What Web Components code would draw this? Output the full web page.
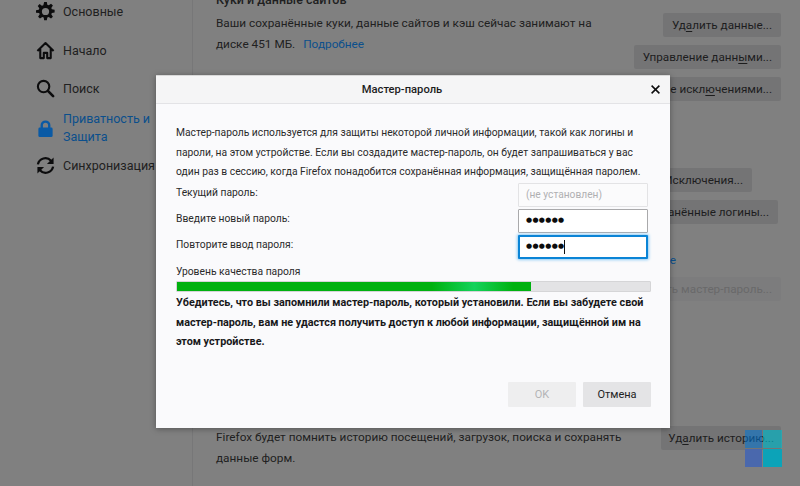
<!DOCTYPE html>
<html lang="ru">
<head>
<meta charset="utf-8">
<title>Мастер-пароль</title>
<style>
  html, body { margin: 0; height: 100%; }
  body { width: 800px; height: 486px; overflow: hidden; position: relative; font-family: Roboto, "Noto Sans", sans-serif; }
</style>
</head>
<body>
<prefs-page>
  <prefs-sidebar slot="sidebar">
    <nav-item icon="gear">Основные</nav-item>
    <nav-item icon="home" style="--top:20px">Начало</nav-item>
    <nav-item icon="search" style="--top:19px">Поиск</nav-item>
    <nav-item icon="lock" active style="--top:12px">Приватность и<br>Защита</nav-item>
    <nav-item icon="sync" style="--top:10px">Синхронизация</nav-item>
  </prefs-sidebar>
  <prefs-content slot="content"></prefs-content>
</prefs-page>
<modal-layer>
  <password-dialog></password-dialog>
</modal-layer>
<corner-logo></corner-logo>

<script>
const icons = {
  gear: `<path fill="#0c0c0d" fill-rule="evenodd" d="M8.600 0h2.800l.5 2.900 1.500.6L15.800 1.800l2 2-1.700 2.400.6 1.500 2.900.5v2.800l-2.900.5-.6 1.500 1.700 2.400-2 2-2.400-1.700-1.500.6-.5 2.900H8.600l-.5-2.900-1.500-.6-2.400 1.700-2-2 1.700-2.400-.6-1.500L0 11.400V8.600l2.900-.5.6-1.500-1.700-2.400 2-2 2.400 1.700 1.500-.6zM10 6.200a3.800 3.800 0 1 0 0 7.600 3.800 3.800 0 0 0 0-7.600z"/>`,
  home: `<path fill="none" stroke="#0c0c0d" stroke-width="2.200" stroke-linejoin="round" d="M1.500 10.500 10 2.200l8.500 8.300M4.500 8.500V18h3.700v-5.500h3.600V18h3.700V8.500"/>`,
  search: `<circle cx="8" cy="8" r="6" fill="none" stroke="#0c0c0d" stroke-width="2.200"/><path stroke="#0c0c0d" stroke-width="2.800" stroke-linecap="round" d="m12.800 12.800 5.200 5.200"/>`,
  lock: `<path fill="#0a5aa5" fill-rule="evenodd" d="M10 1.500a5.200 5.200 0 0 0-5.200 5.200V9H4a1.500 1.500 0 0 0-1.500 1.500v7A1.500 1.500 0 0 0 4 19h12a1.500 1.500 0 0 0 1.500-1.500v-7A1.500 1.500 0 0 0 16 9h-.8V6.700A5.200 5.200 0 0 0 10 1.500zM7.300 9V6.700a2.700 2.700 0 0 1 5.400 0V9z"/>`,
  sync: `<g fill="none" stroke="#0c0c0d" stroke-width="2.400"><path d="M2 8.800A8 8 0 0 1 15.800 5"/><path d="M18 11.200A8 8 0 0 1 4.200 15"/></g><path fill="#0c0c0d" d="M18.500 1.500v7h-7zM1.500 18.500v-7h7z"/>`
};

class PrefsPage extends HTMLElement {
  constructor() {
    super();
    this.attachShadow({mode: 'open'});
    this.shadowRoot.innerHTML = `
      <style>
        :host { display: flex; width: 800px; height: 486px; background: #808080; color: #1f1f20; overflow: hidden; }
      </style>
      <slot name="sidebar"></slot>
      <slot name="content"></slot>`;
  }
}

class PrefsSidebar extends HTMLElement {
  constructor() {
    super();
    this.attachShadow({mode: 'open'});
    this.shadowRoot.innerHTML = `
      <style>
        :host {
          display: flex; flex-direction: column; box-sizing: border-box; flex: none;
          width: 193px; height: 486px; padding: 2px 0 0 36px;
          border-right: 1px solid #777778;
        }
      </style>
      <slot></slot>`;
  }
}

class NavItem extends HTMLElement {
  constructor() {
    super();
    this.attachShadow({mode: 'open'});
    const active = this.hasAttribute('active');
    this.shadowRoot.innerHTML = `
      <style>
        :host {
          display: flex; align-items: center; gap: 8px;
          margin-top: var(--top, 0);
          font-size: 12.500px; line-height: 18px; white-space: nowrap;
          color: ${active ? '#0b4f8c' : '#202021'};
        }
        svg { width: 19px; height: 19px; flex: none; }
      </style>
      <svg viewBox="0 0 20 20">${icons[this.getAttribute('icon')]}</svg>
      <span><slot></slot></span>`;
  }
}

class PrefButton extends HTMLElement {
  constructor() {
    super();
    this.attachShadow({mode: 'open'});
    this.shadowRoot.innerHTML = `
      <style>
        :host {
          display: flex; align-items: center; justify-content: center; box-sizing: border-box;
          height: 24px; padding: 0 var(--pad, 9px); border-radius: 2px; white-space: nowrap;
          background: #747475; color: #1d1d1e; font-size: 11.700px;
          margin-left: auto;
        }
        :host([disabled]) { background: #7c7c7d; color: #69696a; }
      </style>
      <slot></slot>`;
  }
}

class PrefsContent extends HTMLElement {
  constructor() {
    super();
    this.attachShadow({mode: 'open'});
    this.shadowRoot.innerHTML = `
      <style>
        :host {
          display: grid; grid-template-columns: 365px 200px;
          box-sizing: border-box; flex: none; width: 607px; height: 486px; padding: 0 19px 0 23px;
          font-size: 11.800px; line-height: 21px; color: #202021; align-content: start;
        }
        .left { height: 426px; white-space: nowrap; }
        h2 { font-size: 12.500px; font-weight: 500; margin: -11px 0 0; line-height: 21px; height: 24px; }
        p { margin: 0; }
        a { color: #0b4f8c; text-decoration: none; margin-left: 5px; }
        .more { margin: 195px 0 0 394px; height: 21px; }
        .right { display: flex; flex-direction: column; height: 426px; }
        u { text-underline-offset: 2px; }
        .tail { grid-column: 1 / 3; display: flex; justify-content: space-between; }
        .tail p { margin-top: 1px; white-space: nowrap; }
      </style>
      <div class="left">
        <h2>Куки и данные сайтов</h2>
        <p>Ваши сохранённые куки, данные сайтов и кэш сейчас занимают на<br>диске 451 МБ. <a>Подробнее</a></p>
        <p class="more"><a>Подробнее</a></p>
      </div>
      <div class="right">
        <pref-button style="margin-top:13px">Уд<u>а</u>лить данные...</pref-button>
        <pref-button style="margin-top:8px">Управление данн<u>ы</u>ми...</pref-button>
        <pref-button style="margin-top:8px">Управление искл<u>ю</u>чениями...</pref-button>
        <pref-button style="margin-top:67px;margin-right:29px">Исключения...</pref-button>
        <pref-button style="margin-top:8px;margin-right:3px">Сохранённые логины...</pref-button>
        <pref-button disabled style="margin-top:53px">Сменить мастер-пароль...</pref-button>
      </div>
      <div class="tail">
        <p>Firefox будет помнить историю посещений, загрузок, поиска и сохранять<br>данные форм.</p>
        <pref-button style="--pad:7px">Уд<u>а</u>лить историю...</pref-button>
      </div>`;
  }
}

class ModalLayer extends HTMLElement {
  constructor() {
    super();
    this.attachShadow({mode: 'open'});
    this.shadowRoot.innerHTML = `
      <style>
        :host { display: block; position: absolute; left: 156px; top: 75px; }
      </style>
      <slot></slot>`;
  }
}

class DialogButton extends HTMLElement {
  constructor() {
    super();
    this.attachShadow({mode: 'open'});
    this.shadowRoot.innerHTML = `
      <style>
        :host {
          display: flex; align-items: center; justify-content: center;
          box-sizing: border-box; padding-top: 1px;
          width: 68px; height: 25px; border-radius: 1px;
          background: #e4e4e6; color: #222223; font-size: 11px;
        }
        :host([disabled]) { background: #eeeeef; color: #b4b4b6; }
      </style>
      <slot></slot>`;
  }
}

class PasswordField extends HTMLElement {
  constructor() {
    super();
    this.attachShadow({mode: 'open'});
    const state = this.getAttribute('state') || '';
    this.shadowRoot.innerHTML = `
      <style>
        :host { display: flex; align-items: center; justify-content: space-between; height: 24px; color: #2a2a2b; }
        .label { padding-bottom: 5px; line-height: 17px; }
        .box {
          box-sizing: border-box; width: 130px; height: 24px; padding: 0 6px 0 7px;
          display: flex; align-items: center; background: #fff; border: 1px solid #a9a9ab;
          font-size: 10.200px; color: #0c0c0d; border-radius: 1px;
        }
        .box.off { background: #fbfbfc; border-color: #e3e3e5; color: #b0b0b2; }
        .box.focus { border: 2px solid #0a84d6; box-shadow: 0 0 3px 1px #8fcdf5; padding-left: 6px; }
        .dots { letter-spacing: .3px; font-family: "DejaVu Sans", sans-serif; font-size: 7px; }
        .caret { width: 1px; height: 14px; background: #111; }
      </style>
      <span class="label"><slot></slot></span>
      <div class="box ${state}">
        ${this.hasAttribute('placeholder') ? `<span>${this.getAttribute('placeholder')}</span>` : `<span class="dots">●●●●●●</span>`}
        ${state === 'focus' ? '<span class="caret"></span>' : ''}
      </div>`;
  }
}

class QualityMeter extends HTMLElement {
  constructor() {
    super();
    this.attachShadow({mode: 'open'});
    this.shadowRoot.innerHTML = `
      <style>
        :host { display: block; height: 11px; box-sizing: border-box; background: #e3e3e5; border: 1px solid #d5d5d7; border-radius: 1px; }
        .fill {
          width: 354px; height: 100%;
          background: linear-gradient(90deg, #00b10f 0, #00b10f 72%, #14d25c 84%, #00b10f 95%);
        }
      </style>
      <div class="fill"></div>`;
  }
}

class PasswordDialog extends HTMLElement {
  constructor() {
    super();
    this.attachShadow({mode: 'open'});
    this.shadowRoot.innerHTML = `
      <style>
        :host {
          display: flex; flex-direction: column; box-sizing: border-box;
          width: 514px; height: 353px; background: #fafafc; color: #2a2a2b;
          box-shadow: 0 1px 6px rgba(0,0,0,.35); border-top: 1px solid #d8d8d8;
          font-size: 10.300px; line-height: 19.500px;
        }
        header {
          display: flex; align-items: center; justify-content: center; position: relative;
          box-sizing: border-box; padding-right: 22px;
          height: 28px; flex: none; background: #f5f5f6; border-bottom: 1px solid #e3e3e6;
          font-size: 11.200px; font-weight: 500; color: #1c1c1d;
        }
        header svg { position: absolute; right: 10px; top: 9px; width: 9px; height: 9px; }
        main { flex: 1; display: flex; flex-direction: column; padding: 19px 22px 0 20px; }
        p { margin: 0; }
        .fields { display: flex; flex-direction: column; gap: 2px; margin-top: 1px; }
        .meter-label { margin-top: 3px; }
        quality-meter { margin: 0 -3px 0 0; }
        .warn { font-size: 10.800px; font-weight: 700; margin-top: 1px; color: #18181a; white-space: nowrap; }
        footer { display: flex; justify-content: flex-end; gap: 7px; padding: 0 19px 21px; }
      </style>
      <header>Мастер-пароль
        <svg viewBox="0 0 9 9"><path stroke="#0c0c0d" stroke-width="1.500" d="m.6.6 7.800 7.800M8.400.6.600 8.400"/></svg>
      </header>
      <main>
        <p style="white-space:nowrap">Мастер-пароль используется для защиты некоторой личной информации, такой как логины и<br>пароли, на этом устройстве. Если вы создадите мастер-пароль, он будет запрашиваться у вас<br>один раз в сессию, когда Firefox понадобится сохранённая информация, защищённая паролем.</p>
        <div class="fields">
          <password-field state="off" placeholder="(не установлен)">Текущий пароль:</password-field>
          <password-field>Введите новый пароль:</password-field>
          <password-field state="focus">Повторите ввод пароля:</password-field>
        </div>
        <div class="meter-label">Уровень качества пароля</div>
        <quality-meter></quality-meter>
        <p class="warn">Убедитесь, что вы запомнили мастер-пароль, который установили. Если вы забудете свой<br>мастер-пароль, вам не удастся получить доступ к любой информации, защищённой им на<br>этом устройстве.</p>
      </main>
      <footer>
        <dialog-button disabled>OK</dialog-button>
        <dialog-button>Отмена</dialog-button>
      </footer>`;
  }
}

class CornerLogo extends HTMLElement {
  constructor() {
    super();
    this.attachShadow({mode: 'open'});
    this.shadowRoot.innerHTML = `
      <style>
        :host {
          position: absolute; left: 745px; top: 430px;
          display: grid; grid-template-columns: 17px 19px; grid-template-rows: 18px 18px; gap: 1px;
        }
        i { display: block; }
      </style>
      <i style="background:rgba(0,118,215,.55)"></i>
      <i style="background:rgba(0,185,200,.65)"></i>
      <i style="background:#4a68ad"></i>
      <i style="background:#0ca3b8"></i>`;
  }
}

customElements.define('prefs-page', PrefsPage);
customElements.define('prefs-sidebar', PrefsSidebar);
customElements.define('nav-item', NavItem);
customElements.define('pref-button', PrefButton);
customElements.define('prefs-content', PrefsContent);
customElements.define('modal-layer', ModalLayer);
customElements.define('dialog-button', DialogButton);
customElements.define('password-field', PasswordField);
customElements.define('quality-meter', QualityMeter);
customElements.define('password-dialog', PasswordDialog);
customElements.define('corner-logo', CornerLogo);
</script>
</body>
</html>
